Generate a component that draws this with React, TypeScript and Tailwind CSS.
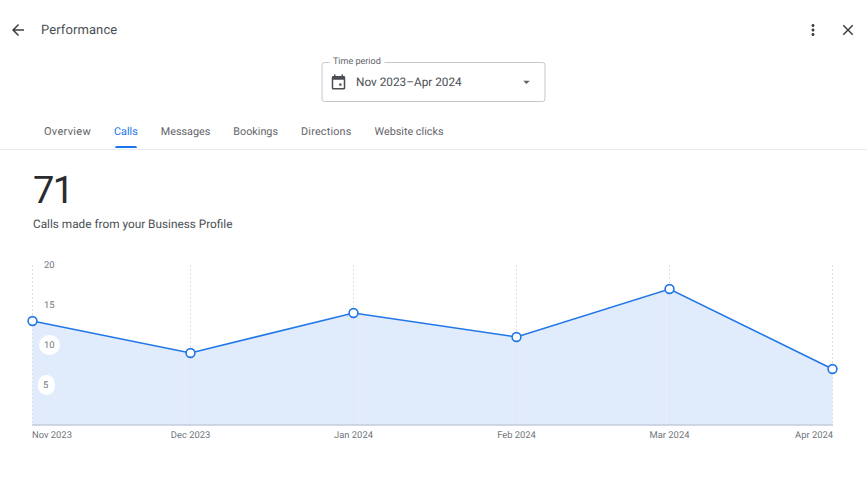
import React from "react";

const tabs = [
  { label: "Overview", cls: "text-[11px] tracking-[0.3px] text-[#5f6368]" },
  { label: "Calls", cls: "text-[10.8px] text-[#1a73e8]" },
  { label: "Messages", cls: "text-[10.8px] text-[#5f6368]" },
  { label: "Bookings", cls: "text-[10.8px] text-[#5f6368]" },
  { label: "Directions", cls: "text-[10.8px] tracking-[0.2px] text-[#5f6368]" },
  { label: "Website clicks", cls: "text-[10.8px] text-[#5f6368]" },
];
const pts: [number, number][] = [[32.5, 66], [190.5, 98], [353.5, 58], [516.5, 82], [669.5, 34], [832.5, 114]];
const base = 170;
const xLabels: [string, number, "start" | "middle" | "end"][] = [
  ["Nov 2023", 32, "start"],
  ["Dec 2023", 190.5, "middle"],
  ["Jan 2024", 353.5, "middle"],
  ["Feb 2024", 516.5, "middle"],
  ["Mar 2024", 669.5, "middle"],
  ["Apr 2024", 833, "end"],
];

function Chart() {
  const line = pts.map((p) => p.join(",")).join(" ");
  const area = `32.5,${base} ${line} 832.5,${base}`;
  return (
    <svg width={867} height={190} viewBox="0 0 867 190" className="block" style={{ fontFamily: "Roboto, sans-serif" }}>
      <polygon points={area} fill="#e0ebfb" />
      {pts.map(([x]) => (
        <line key={x} x1={x} x2={x} y1={10} y2={base} stroke="#dfe1e5" strokeWidth={1} strokeDasharray="2 2" />
      ))}
      <line x1={32} x2={833} y1={base} y2={base} stroke="#c3cbdc" strokeWidth={1.5} />
      <rect x={39} y={80} width={21} height={20} rx={10} fill="#fff" />
      <rect x={38} y={120} width={17} height={20} rx={8.5} fill="#fff" />
      {[["20", 44, 13], ["15", 44, 53], ["10", 44, 93], ["5", 43, 133]].map(([t, x, y]) => (
        <text key={t} x={x} y={y} fontSize={9.4} fill="#70757a">{t}</text>
      ))}
      <polyline points={line} fill="none" stroke="#2176e8" strokeWidth={1.6} />
      {pts.map(([x, y]) => (
        <circle key={x} cx={x} cy={y} r={4.4} fill="#fff" stroke="#2176e8" strokeWidth={1.6} />
      ))}
      {xLabels.map(([t, x, a]) => (
        <text key={t} x={x} y={183} fontSize={9.4} fill="#70757a" textAnchor={a}>{t}</text>
      ))}
    </svg>
  );
}

export default function App() {
  return (
    <div className="w-[867px] h-[477px] overflow-hidden bg-white font-['Roboto',sans-serif] [text-rendering:geometricPrecision]">
      <header className="h-[60px] flex items-center pl-[9px] pr-[10px]">
        <svg width="18" height="18" viewBox="0 0 24 24" className="text-[#3c4043]" fill="currentColor">
          <path d="M20 11H7.83l5.59-5.59L12 4l-8 8 8 8 1.41-1.41L7.83 13H20v-2z" />
        </svg>
        <h1 className="ml-[14px] mt-[2px] text-[13px] text-[#4b4f54] tracking-[0.1px]">Performance</h1>
        <div className="ml-auto flex items-center gap-[17px]">
          <svg width="18" height="18" viewBox="0 0 24 24" fill="#3c4043">
            <path d="M12 8c1.1 0 2-.9 2-2s-.9-2-2-2-2 .9-2 2 .9 2 2 2zm0 2c-1.1 0-2 .9-2 2s.9 2 2 2 2-.9 2-2-.9-2-2-2zm0 6c-1.1 0-2 .9-2 2s.9 2 2 2 2-.9 2-2-.9-2-2-2z" />
          </svg>
          <svg width="18" height="18" viewBox="0 0 24 24" fill="#3c4043">
            <path d="M19 6.41 17.59 5 12 10.59 6.41 5 5 6.41 10.59 12 5 17.59 6.41 19 12 13.41 17.59 19 19 17.59 13.41 12z" />
          </svg>
        </div>
      </header>

      <div className="flex justify-center">
        <div className="relative w-[224px] h-[40px] mt-[2px] border border-[#c4c7cc] rounded-[3px] flex items-center pl-[7px] pr-[10px] translate-x-[-0.5px]">
          <span className="absolute left-[7px] top-[-6px] bg-white px-[4px] text-[9px] leading-[11px] text-[#5f6368]">Time period</span>
          <svg width="18" height="18" viewBox="0 0 24 24" fill="#4a4e53">
            <path d="M19 4h-1V2h-2v2H8V2H6v2H5c-1.1 0-2 .9-2 2v14c0 1.1.9 2 2 2h14c1.1 0 2-.9 2-2V6c0-1.1-.9-2-2-2zm0 16H5V9h14v11zm-3-6h-3v3h3v-3z" />
          </svg>
          <span className="ml-[9px] mt-[2px] text-[11.8px] text-[#4b4f54]">Nov 2023–Apr 2024</span>
          <svg width="16" height="16" viewBox="0 0 24 24" fill="#5f6368" className="ml-auto">
            <path d="M7 10l5 5 5-5z" />
          </svg>
        </div>
      </div>

      <nav className="mt-[12px] h-[36px] pl-[32.5px] flex border-b border-[#e8eaed]">
        {tabs.map((t) => (
          <div key={t.label} className={`relative px-[11.5px] pt-[11px] leading-[14px] ${t.cls}`}>
            {t.label}
            {t.label === "Calls" && <span className="absolute left-[12.5px] right-[12.5px] bottom-[1px] h-[2px] rounded-t-[2px] bg-[#1a73e8]" />}
          </div>
        ))}
      </nav>

      <section className="pl-[33px] pt-[17px]">
        <div className="text-[38px] leading-[46px] tracking-[-1.5px] text-[#2a2b2e] translate-y-[1px]">71</div>
        <p className="mt-[3px] text-[11.8px] leading-[16px] text-[#4b4f54]">Calls made from your Business Profile</p>
      </section>

      <div className="mt-[23px]">
        <Chart />
      </div>
    </div>
  );
}
